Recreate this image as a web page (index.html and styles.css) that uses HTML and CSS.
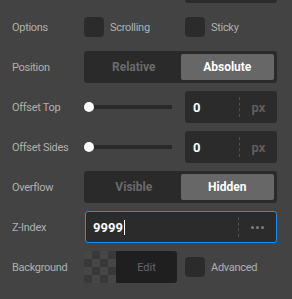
FILE: index.html
```html
<!DOCTYPE html>
<html lang="en">
<head>
    <meta charset="UTF-8">
    <meta name="viewport" content="width=device-width, initial-scale=1.0">
    <title>Layout Settings</title>
    <link rel="stylesheet" href="styles.css">
</head>
<body>
    <div class="panel">
        <!-- tail of the control above, scrolled out of view -->
        <div class="stub-row">
            <div class="stub"></div>
        </div>

        <div class="row">
            <span class="label">Options</span>
            <div class="controls two">
                <label class="check"><span class="box"></span>Scrolling</label>
                <label class="check"><span class="box"></span>Sticky</label>
            </div>
        </div>

        <div class="row">
            <span class="label">Position</span>
            <div class="controls">
                <div class="segment">
                    <button type="button">Relative</button>
                    <button type="button" class="active">Absolute</button>
                </div>
            </div>
        </div>

        <div class="row">
            <span class="label">Offset Top</span>
            <div class="controls two">
                <div class="slider"><span class="track"></span><span class="knob"></span></div>
                <div class="field">
                    <span class="value">0</span>
                    <span class="unit">px</span>
                </div>
            </div>
        </div>

        <div class="row">
            <span class="label">Offset Sides</span>
            <div class="controls two">
                <div class="slider"><span class="track"></span><span class="knob"></span></div>
                <div class="field">
                    <span class="value">0</span>
                    <span class="unit">px</span>
                </div>
            </div>
        </div>

        <div class="row">
            <span class="label">Overflow</span>
            <div class="controls">
                <div class="segment">
                    <button type="button">Visible</button>
                    <button type="button" class="active">Hidden</button>
                </div>
            </div>
        </div>

        <div class="row">
            <span class="label">Z-Index</span>
            <div class="controls">
                <div class="field focused">
                    <span class="value">9999<span class="caret"></span></span>
                    <span class="unit more"><i></i><i></i><i></i></span>
                </div>
            </div>
        </div>

        <div class="row">
            <span class="label">Background</span>
            <div class="controls two">
                <div class="bg-picker">
                    <span class="checker"></span>
                    <button type="button" class="edit">Edit</button>
                </div>
                <label class="check"><span class="box"></span>Advanced</label>
            </div>
        </div>
    </div>
</body>
</html>
```

FILE: styles.css
```css
body {
    margin: 0;
    padding: 0;
    background-color: #434343;
    font-family: 'Roboto', 'Liberation Sans', sans-serif;
    color: #b4b4b4;
    overflow: hidden;
}

.panel {
    padding: 0 15px 0 12px;
    display: flex;
    flex-direction: column;
    gap: 8px;
}

.stub-row {
    display: flex;
    justify-content: flex-end;
}

.stub {
    width: 92px;
    height: 3px;
    background-color: #2b2b2b;
    border-radius: 0 0 3px 3px;
}

.row {
    display: flex;
    align-items: center;
    height: 32px;
}

.label {
    width: 72px;
    flex-shrink: 0;
    font-size: 11px;
    letter-spacing: -0.3px;
    color: #b0b0b0;
}

.controls {
    flex: 1;
    height: 100%;
    display: flex;
}

.controls.two {
    display: grid;
    grid-template-columns: 93px 92px;
    column-gap: 8px;
    align-items: center;
}

/* checkboxes */
.check {
    display: flex;
    align-items: center;
    gap: 6px;
    font-size: 11px;
    letter-spacing: -0.3px;
    color: #b0b0b0;
}

.box {
    width: 20px;
    height: 20px;
    border-radius: 4px;
    background-color: #2b2b2b;
}

/* segmented buttons */
.segment {
    flex: 1;
    display: flex;
    padding: 3px;
    background-color: #2a2a2a;
    border-radius: 3px;
}

.segment button {
    flex: 1;
    border: none;
    border-radius: 2px;
    background: none;
    font-family: inherit;
    font-size: 12px;
    font-weight: bold;
    color: #6a6a6a;
    padding: 0;
}

.segment button.active {
    background-color: #676767;
    color: #fff;
}

/* sliders */
.slider {
    position: relative;
    height: 10px;
    padding-right: 5px;
    display: flex;
    align-items: center;
}

.track {
    flex: 1;
    height: 4px;
    margin-left: 6px;
    background-color: #2a2a2a;
}

.knob {
    position: absolute;
    left: 0;
    top: 0;
    width: 10px;
    height: 10px;
    border-radius: 50%;
    background-color: #fff;
}

/* number fields */
.field {
    flex: 1;
    height: 32px;
    box-sizing: border-box;
    display: flex;
    align-items: center;
    background-color: #2b2b2b;
    border-radius: 3px;
}

.field .value {
    flex: 1;
    padding-left: 8px;
    font-size: 13px;
    font-weight: bold;
    color: #fff;
    display: flex;
    align-items: center;
}

.field .unit {
    width: 37px;
    height: 20px;
    border-left: 1px dashed #505050;
    display: flex;
    align-items: center;
    justify-content: center;
    gap: 2px;
    font-size: 13px;
    font-weight: bold;
    color: #5e5e5e;
}

.field .unit.more i {
    width: 3px;
    height: 3px;
    border-radius: 50%;
    background-color: #7e7e7e;
}

.field.focused {
    border: 1px solid #1e8cf0;
    margin-left: 1px;
}

.field.focused .value {
    padding-left: 7px;
}

.caret {
    width: 1px;
    height: 15px;
    margin-left: 1px;
    background-color: #fff;
}

/* background picker */
.bg-picker {
    display: flex;
    height: 32px;
    border-radius: 3px;
    overflow: hidden;
}

.checker {
    width: 32px;
    height: 32px;
    background-image: conic-gradient(#393939 25%, #464646 0 50%, #393939 0 75%, #464646 0);
    background-size: 16px 16px;
}

.edit {
    flex: 1;
    border: none;
    background-color: #1f1f1f;
    font-family: inherit;
    font-size: 11px;
    color: #676767;
    padding: 0;
}
```
